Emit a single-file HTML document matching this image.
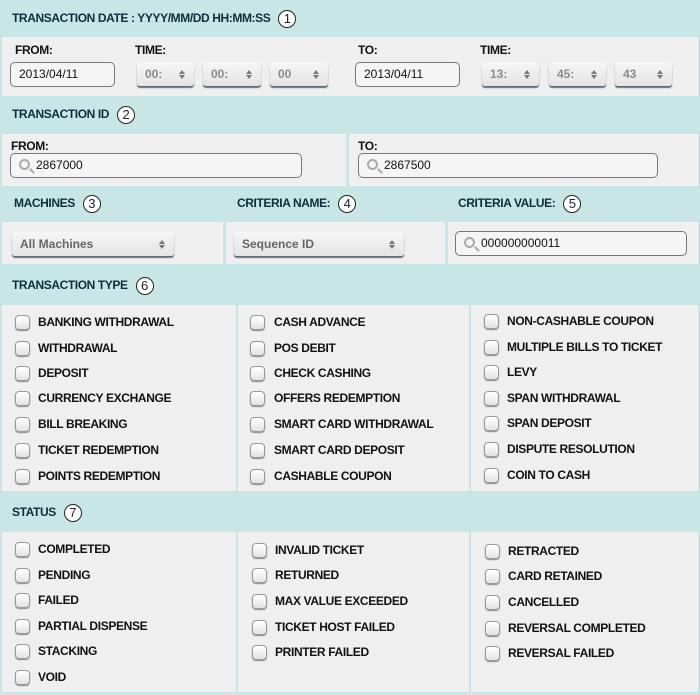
<!DOCTYPE html><html><head><style>
*{margin:0;padding:0;box-sizing:border-box}
body{width:700px;height:695px;background:#c8e6e6;position:relative;overflow:hidden;font-family:"Liberation Sans",sans-serif;font-weight:bold;color:#111}
.bd{position:absolute;background:#efefef}
.h{position:absolute;font-size:12px;color:#0f2d3a;white-space:nowrap;letter-spacing:-0.4px}
.n{display:inline-block;width:18px;height:18px;border:1.3px solid #222;border-radius:50%;font-weight:normal;font-size:13px;line-height:16px;text-align:center;color:#222;vertical-align:middle;margin-left:8px;background:#fff;letter-spacing:0}
.l{position:absolute;font-size:12px;color:#111;letter-spacing:-0.35px;white-space:nowrap}
.in{position:absolute;border:1px solid #777;border-radius:5px;background:#f5f5f5;font-size:12px;font-weight:normal;padding-left:8px;line-height:22px;color:#111}
.sp{position:absolute;border-radius:3px;background:linear-gradient(#f6f6f6,#e4e4e4);box-shadow:0 2px 1px #5f6f76;font-size:12px;color:#8a8a8a;padding-left:8px;line-height:24px}
.sp:after{content:"";position:absolute;right:9px;top:8px;border:3.5px solid transparent;border-bottom:4px solid #777;border-top:none}
.sp:before{content:"";position:absolute;right:9px;top:13px;border:3.5px solid transparent;border-top:4px solid #777;border-bottom:none}
.mg{position:absolute;left:8px;top:5px;width:11px;height:11px;border:2px solid #aaa;border-radius:50%}
.mg:after{content:"";position:absolute;left:8px;top:9px;width:6px;height:2px;background:#aaa;transform:rotate(45deg)}
.cb{position:absolute;width:15px;height:15px;border:1px solid #999;border-radius:4px;background:linear-gradient(#fff,#e3e3e3);box-shadow:0 1px 1px #888}
</style></head><body>
<div class="h" style="left:12px;top:10px">TRANSACTION DATE : YYYY/MM/DD HH:MM:SS<span class="n">1</span></div>
<div class="bd" style="left:2px;top:37px;width:696px;height:59px"></div>
<div class="l" style="left:15px;top:43px">FROM:</div>
<div class="l" style="left:135px;top:43px">TIME:</div>
<div class="l" style="left:358px;top:43px">TO:</div>
<div class="l" style="left:480px;top:43px">TIME:</div>
<div class="in" style="left:10px;top:62px;width:105px;height:25px">2013/04/11</div>
<div class="sp" style="left:137px;top:62px;width:57px;height:24px">00:</div>
<div class="sp" style="left:203px;top:62px;width:58px;height:24px">00:</div>
<div class="sp" style="left:270px;top:62px;width:58px;height:24px">00</div>
<div class="in" style="left:355px;top:62px;width:105px;height:25px">2013/04/11</div>
<div class="sp" style="left:482px;top:62px;width:57px;height:24px">13:</div>
<div class="sp" style="left:549px;top:62px;width:57px;height:24px">45:</div>
<div class="sp" style="left:615px;top:62px;width:57px;height:24px">43</div>
<div class="h" style="left:12px;top:106px">TRANSACTION ID<span class="n">2</span></div>
<div class="bd" style="left:2px;top:134px;width:344px;height:52px"></div>
<div class="bd" style="left:349px;top:134px;width:349px;height:52px"></div>
<div class="l" style="left:11px;top:139px">FROM:</div>
<div class="l" style="left:358px;top:139px">TO:</div>
<div class="in" style="left:10px;top:153px;width:292px;height:25px;padding-left:25px"><i class="mg"></i>2867000</div>
<div class="in" style="left:358px;top:153px;width:300px;height:25px;padding-left:25px"><i class="mg"></i>2867500</div>
<div class="h" style="left:14px;top:195px">MACHINES<span class="n">3</span></div>
<div class="h" style="left:237px;top:195px">CRITERIA NAME:<span class="n">4</span></div>
<div class="h" style="left:458px;top:195px">CRITERIA VALUE:<span class="n">5</span></div>
<div class="bd" style="left:2px;top:222px;width:221px;height:42px"></div>
<div class="bd" style="left:226px;top:222px;width:219px;height:42px"></div>
<div class="bd" style="left:448px;top:222px;width:250px;height:42px"></div>
<div class="sp" style="left:12px;top:232px;width:162px;height:24px;color:#666">All Machines</div>
<div class="sp" style="left:234px;top:232px;width:170px;height:24px;color:#666">Sequence ID</div>
<div class="in" style="left:455px;top:231px;width:232px;height:25px;padding-left:25px"><i class="mg"></i>000000000011</div>
<div class="h" style="left:12px;top:277px">TRANSACTION TYPE<span class="n">6</span></div>
<div class="bd" style="left:2px;top:305px;width:234px;height:186px"></div>
<div class="bd" style="left:238px;top:305px;width:231px;height:186px"></div>
<div class="bd" style="left:471px;top:305px;width:227px;height:186px"></div>
<div class="h" style="left:12px;top:504px">STATUS<span class="n">7</span></div>
<div class="bd" style="left:2px;top:532px;width:234px;height:160px"></div>
<div class="bd" style="left:238px;top:532px;width:231px;height:160px"></div>
<div class="bd" style="left:471px;top:532px;width:227px;height:160px"></div>
<div id="c"></div>
<script>
var c=document.getElementById('c'),h='';
function col(x,tx,ys,ls){for(var i=0;i<ls.length;i++){h+='<div class="cb" style="left:'+x+'px;top:'+(ys[i]-7)+'px"></div><div class="l" style="left:'+tx+'px;top:'+(ys[i]-7)+'px">'+ls[i]+'</div>';}}
col(15,38,[322,348,373,398,424,450,476],["BANKING WITHDRAWAL","WITHDRAWAL","DEPOSIT","CURRENCY EXCHANGE","BILL BREAKING","TICKET REDEMPTION","POINTS REDEMPTION"]);
col(250,274,[322,348,373,398,424,450,476],["CASH ADVANCE","POS DEBIT","CHECK CASHING","OFFERS REDEMPTION","SMART CARD WITHDRAWAL","SMART CARD DEPOSIT","CASHABLE COUPON"]);
col(484,507,[321,347,372,398,423,449,475],["NON-CASHABLE COUPON","MULTIPLE BILLS TO TICKET","LEVY","SPAN WITHDRAWAL","SPAN DEPOSIT","DISPUTE RESOLUTION","COIN TO CASH"]);
col(15,38,[549,575,600,626,651,677],["COMPLETED","PENDING","FAILED","PARTIAL DISPENSE","STACKING","VOID"]);
col(252,275,[550,575,601,627,652],["INVALID TICKET","RETURNED","MAX VALUE EXCEEDED","TICKET HOST FAILED","PRINTER FAILED"]);
col(485,508,[551,576,602,628,653],["RETRACTED","CARD RETAINED","CANCELLED","REVERSAL COMPLETED","REVERSAL FAILED"]);
c.innerHTML=h;
</script>
</body></html>
